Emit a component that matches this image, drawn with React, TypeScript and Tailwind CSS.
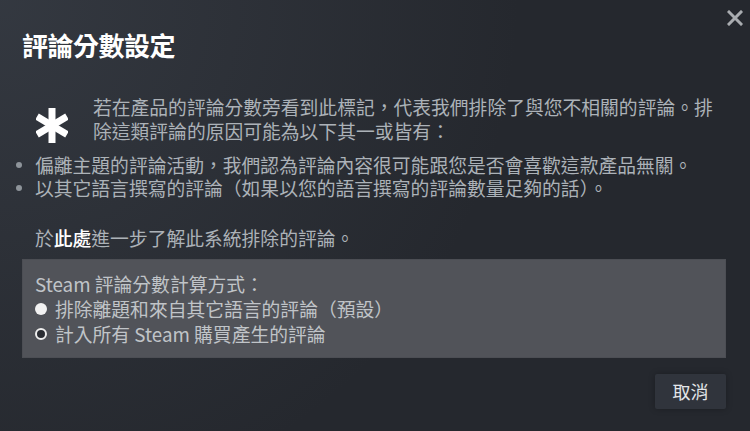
import { useState } from 'react';

// 評論分數設定ダイアログ
export default function App() {
  const [mode, setMode] = useState<'filtered' | 'all'>('filtered');

  const options = [
    { key: 'filtered' as const, label: '排除離題和來自其它語言的評論（預設）' },
    { key: 'all' as const, label: '計入所有 Steam 購買產生的評論' },
  ];

  return (
    <div className="relative w-[750px] h-[431px] overflow-hidden bg-[#25282e] bg-[radial-gradient(circle_at_top_left,rgba(74,81,92,0.4)_0%,rgba(75,81,92,0)_60%)] pl-[22px] pr-[24px] font-['Noto_Sans_CJK_TC','Noto_Sans',sans-serif] text-[#acb2b8]">
      {/* 閉じるボタン */}
      <button className="absolute top-[10px] right-[7px] w-[16px] h-[16px] text-[#a9acb0]">
        <svg viewBox="0 0 16 16" width="16" height="16" fill="none" stroke="currentColor" strokeWidth="3" strokeLinecap="square">
          <path d="M2 2 L14 14 M14 2 L2 14" />
        </svg>
      </button>

      <h2 className="pt-[29px] text-[26px] leading-[32px] font-bold text-white tracking-[-0.5px]">評論分數設定</h2>

      {/* 説明文 */}
      <div className="mt-[34px] flex text-[18.8px] leading-[24px]">
        <div className="w-[71px] shrink-0">
          <svg className="ml-[14px] mt-[13px]" viewBox="0 0 32 35" width="32" height="35" fill="none" stroke="#ffffff" strokeWidth="7">
            <path d="M16 0 L16 35" />
            <path d="M1 8.5 L31 26.5" />
            <path d="M31 8.5 L1 26.5" />
          </svg>
        </div>
        <p>若在產品的評論分數旁看到此標記，代表我們排除了與您不相關的評論。排除這類評論的原因可能為以下其一或皆有：</p>
      </div>

      <ul className="mt-[10px] -ml-[7px] text-[18.8px] leading-[23px]">
        {[
          '偏離主題的評論活動，我們認為評論內容很可能跟您是否會喜歡這款產品無關。',
          '以其它語言撰寫的評論（如果以您的語言撰寫的評論數量足夠的話）。',
        ].map((item) => (
          <li key={item} className="flex items-center">
            <span className="ml-[1px] mr-[13px] w-[6px] h-[6px] rounded-full bg-[#8e949a] shrink-0" />
            <span>{item}</span>
          </li>
        ))}
      </ul>

      <p className="mt-[27px] pl-[13px] text-[18.8px] leading-[24px]">
        於<a className="text-white font-medium">此處</a>進一步了解此系統排除的評論。
      </p>

      {/* 計算方式 */}
      <div className="mt-[9px] border border-[#4c4e54] bg-[#515359] px-[12px] py-[11px] text-[18.8px] leading-[25px] text-[#c0c4c8]">
        <div>Steam 評論分數計算方式：</div>
        {options.map((opt) => (
          <label key={opt.key} className="flex items-center gap-[8px] cursor-pointer" onClick={() => setMode(opt.key)}>
            {mode === opt.key ? (
              <span className="w-[12px] h-[12px] rounded-full bg-[#f2f2f2] shrink-0" />
            ) : (
              <span className="w-[12px] h-[12px] rounded-full border-[2px] border-[#eeeeee] bg-[#2a2d33] shrink-0" />
            )}
            <span>{opt.label}</span>
          </label>
        ))}
      </div>

      <div className="mt-[16px] flex justify-end">
        <button className="w-[71px] h-[35px] rounded-[2px] bg-[#30343c] text-[18px] text-[#e3e6e9] shadow-[0_0_6px_rgba(0,0,0,0.25)]">
          取消
        </button>
      </div>
    </div>
  );
}
